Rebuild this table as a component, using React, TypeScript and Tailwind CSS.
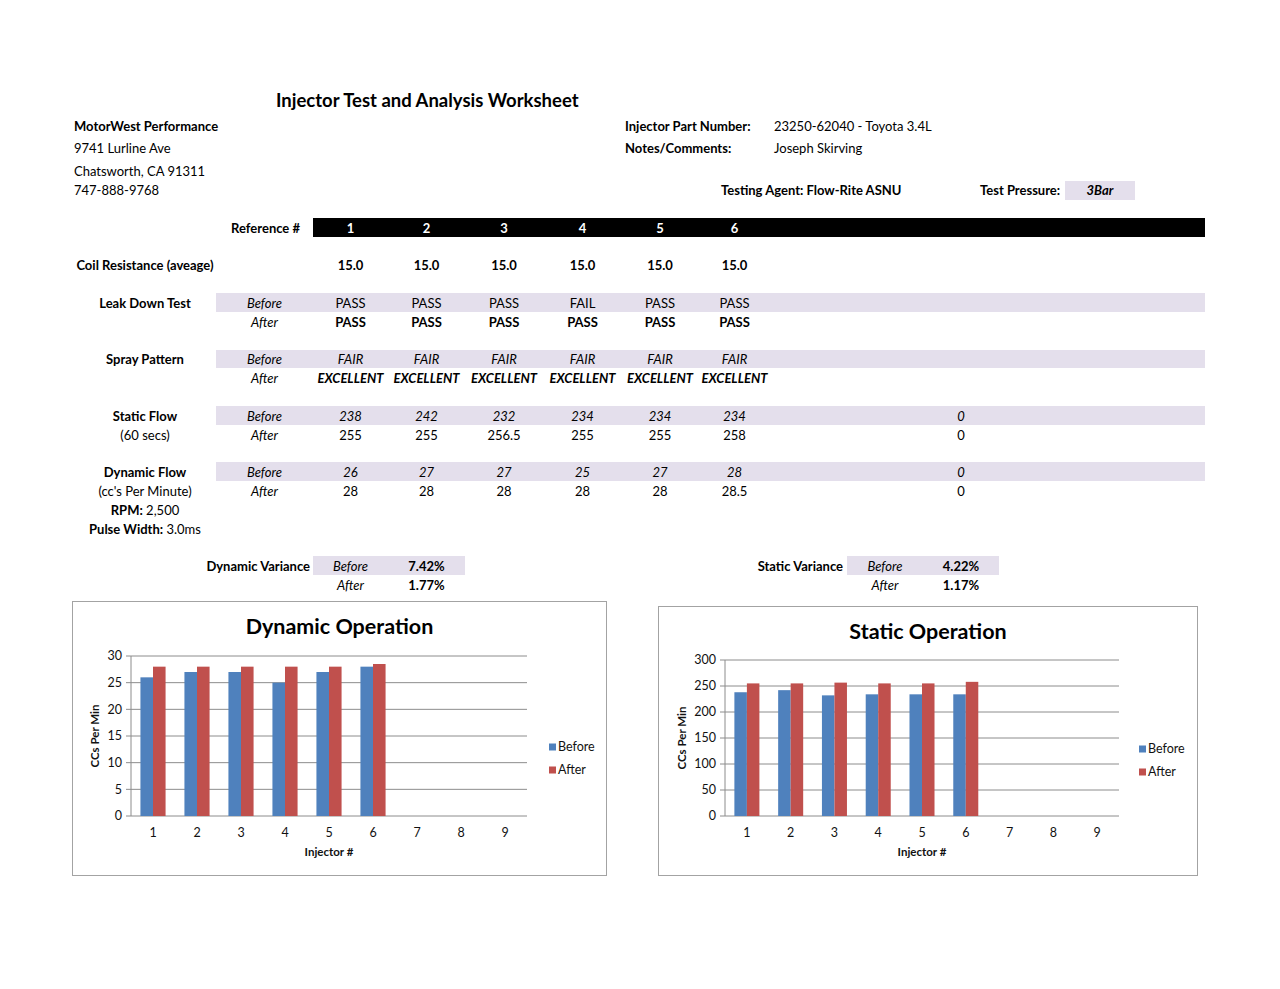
import React from 'react';

const BAND = 'bg-[#e4dfec]';
const GRID =
    'grid grid-cols-[142px_97px_75px_77px_78px_79px_76px_73px_76px_76px_76px_206px] auto-rows-[18.8px]';
const CELL = 'flex items-center justify-center whitespace-nowrap leading-none pt-[2px]';

type RowProps = {
    label?: React.ReactNode;
    sub?: string;
    values?: (string | number)[];
    extra?: string;
    band?: boolean;
    valueClass?: string;
    labelClass?: string;
};

function DataRow({ label, sub, values = [], extra, band, valueClass = '', labelClass = '' }: RowProps) {
    const bg = band ? BAND : '';
    return (
        <>
            <div className={`${CELL} ${labelClass}`}>{label}</div>
            <div className={`${CELL} ${bg} italic`}>{sub}</div>
            {[0, 1, 2, 3, 4, 5].map((i) => (
                <div key={i} className={`${CELL} ${bg} ${valueClass}`}>
                    {values[i]}
                </div>
            ))}
            <div className={bg} />
            <div className={bg} />
            <div className={`${CELL} ${bg} ${valueClass}`}>{extra}</div>
            <div className={bg} />
        </>
    );
}

function Blank() {
    return <div className="col-span-12" />;
}

type ChartProps = {
    title: string;
    w: number;
    h: number;
    px0: number;
    px1: number;
    py0: number;
    py1: number;
    max: number;
    step: number;
    before: number[];
    after: number[];
    titleY: number;
    yTitleX: number;
    xLabelY: number;
    xTitleY: number;
    legendX: number;
    legendY: number;
};

function BarChart(p: ChartProps) {
    const cw = (p.px1 - p.px0) / 9;
    const bar = cw / 3.5;
    const scale = (v: number) => p.py1 - (v / p.max) * (p.py1 - p.py0);
    const ticks: number[] = [];
    for (let v = 0; v <= p.max; v += p.step) ticks.push(v);
    const font = { fontFamily: 'Lato, sans-serif' };

    return (
        <svg width={p.w} height={p.h} style={font} className="block">
            <text x={p.w / 2} y={p.titleY} textAnchor="middle" dominantBaseline="middle" fontSize={21.5} fontWeight={700} fill="#000">
                {p.title}
            </text>
            {ticks.map((v) => (
                <g key={v}>
                    <line x1={p.px0 - 5} x2={p.px1} y1={scale(v)} y2={scale(v)} stroke="#8c8c8c" strokeWidth={1} />
                    <text x={p.px0 - 9} y={scale(v) + 1} textAnchor="end" dominantBaseline="middle" fontSize={12.5} fill="#111">
                        {v}
                    </text>
                </g>
            ))}
            <line x1={p.px0} x2={p.px0} y1={p.py0} y2={p.py1} stroke="#8c8c8c" strokeWidth={1} />
            {p.before.map((v, i) => (
                <g key={i}>
                    <rect x={p.px0 + i * cw + 0.75 * bar} y={scale(v)} width={bar} height={p.py1 - scale(v)} fill="#4f81bd" />
                    <rect x={p.px0 + i * cw + 1.75 * bar} y={scale(p.after[i])} width={bar} height={p.py1 - scale(p.after[i])} fill="#c0504d" />
                </g>
            ))}
            {[1, 2, 3, 4, 5, 6, 7, 8, 9].map((n, i) => (
                <text key={n} x={p.px0 + cw * (i + 0.5)} y={p.xLabelY} textAnchor="middle" dominantBaseline="middle" fontSize={12.5} fill="#111">
                    {n}
                </text>
            ))}
            <text x={(p.px0 + p.px1) / 2} y={p.xTitleY} textAnchor="middle" dominantBaseline="middle" fontSize={11.5} fontWeight={700} fill="#111">
                Injector #
            </text>
            <text
                x={p.yTitleX}
                y={(p.py0 + p.py1) / 2}
                transform={`rotate(-90 ${p.yTitleX} ${(p.py0 + p.py1) / 2})`}
                textAnchor="middle"
                dominantBaseline="middle"
                fontSize={11.5}
                fontWeight={700}
                fill="#111"
            >
                CCs Per Min
            </text>
            <rect x={p.legendX} y={p.legendY - 3.5} width={7} height={7} fill="#4f81bd" />
            <text x={p.legendX + 9} y={p.legendY + 1} dominantBaseline="middle" fontSize={12.5} fill="#111">
                Before
            </text>
            <rect x={p.legendX} y={p.legendY + 19.5} width={7} height={7} fill="#c0504d" />
            <text x={p.legendX + 9} y={p.legendY + 24} dominantBaseline="middle" fontSize={12.5} fill="#111">
                After
            </text>
        </svg>
    );
}

export default function App() {
    return (
        <div className="w-[1280px] h-[989px] bg-white text-[13px] text-black font-['Lato',sans-serif] overflow-hidden">
            <div className="pt-[91px] pl-[74px]">
                {/* header */}
                <div className="h-[20px] pl-[202px] flex items-center text-[18.5px] font-bold whitespace-nowrap">
                    Injector Test and Analysis Worksheet
                </div>
                <div className="mt-[6px] h-[19px] flex items-center whitespace-nowrap">
                    <span className="w-[551px] font-bold">MotorWest Performance</span>
                    <span className="w-[149px] font-bold">Injector Part Number:</span>
                    <span>23250-62040 - Toyota 3.4L</span>
                </div>
                <div className="mt-[3px] h-[19px] flex items-center whitespace-nowrap">
                    <span className="w-[551px]">9741 Lurline Ave</span>
                    <span className="w-[149px] font-bold">Notes/Comments:</span>
                    <span>Joseph Skirving</span>
                </div>
                <div className="mt-[4px] h-[19px] flex items-center whitespace-nowrap">
                    <span>Chatsworth, CA 91311</span>
                </div>
                <div className="h-[19px] flex items-center whitespace-nowrap">
                    <span className="w-[647px]">747-888-9768</span>
                    <span className="w-[259px] font-bold">Testing Agent: Flow-Rite ASNU</span>
                    <span className="w-[85px] font-bold">Test Pressure:</span>
                    <span className={`w-[70px] h-full flex items-center justify-center font-bold italic ${BAND}`}>3Bar</span>
                </div>

                {/* results table */}
                <div className={`mt-[18px] ${GRID}`}>
                    <div />
                    <div className={`${CELL} justify-end pr-[13px] font-bold`}>Reference #</div>
                    {[1, 2, 3, 4, 5, 6].map((n) => (
                        <div key={n} className={`${CELL} bg-black text-white font-bold`}>
                            {n}
                        </div>
                    ))}
                    <div className="bg-black" />
                    <div className="bg-black" />
                    <div className="bg-black" />
                    <div className="bg-black" />
                    <Blank />

                    <DataRow label="Coil Resistance (aveage)" labelClass="font-bold" values={['15.0', '15.0', '15.0', '15.0', '15.0', '15.0']} valueClass="font-bold" />
                    <Blank />

                    <DataRow label="Leak Down Test" labelClass="font-bold" sub="Before" band values={['PASS', 'PASS', 'PASS', 'FAIL', 'PASS', 'PASS']} />
                    <DataRow sub="After" values={['PASS', 'PASS', 'PASS', 'PASS', 'PASS', 'PASS']} valueClass="font-bold" />
                    <Blank />

                    <DataRow label="Spray Pattern" labelClass="font-bold" sub="Before" band values={['FAIR', 'FAIR', 'FAIR', 'FAIR', 'FAIR', 'FAIR']} valueClass="italic" />
                    <DataRow sub="After" values={Array(6).fill('EXCELLENT')} valueClass="font-bold italic" />
                    <Blank />

                    <DataRow label="Static Flow" labelClass="font-bold" sub="Before" band values={[238, 242, 232, 234, 234, 234]} extra="0" valueClass="italic" />
                    <DataRow label="(60 secs)" sub="After" values={[255, 255, '256.5', 255, 255, 258]} extra="0" />
                    <Blank />

                    <DataRow label="Dynamic Flow" labelClass="font-bold" sub="Before" band values={[26, 27, 27, 25, 27, 28]} extra="0" valueClass="italic" />
                    <DataRow label="(cc's Per Minute)" sub="After" values={[28, 28, 28, 28, 28, '28.5']} extra="0" />
                    <DataRow
                        label={
                            <span>
                                <b>RPM:</b> 2,500
                            </span>
                        }
                    />
                    <DataRow
                        label={
                            <span>
                                <b>Pulse Width:</b> 3.0ms
                            </span>
                        }
                    />
                    <Blank />

                    {/* variance */}
                    <div className={`${CELL} col-span-2 justify-end pr-[3px] font-bold`}>Dynamic Variance</div>
                    <div className={`${CELL} ${BAND} italic`}>Before</div>
                    <div className={`${CELL} ${BAND} font-bold`}>7.42%</div>
                    <div />
                    <div />
                    <div />
                    <div className={`${CELL} col-span-2 justify-end pr-[4px] font-bold`}>Static Variance</div>
                    <div className={`${CELL} ${BAND} italic`}>Before</div>
                    <div className={`${CELL} ${BAND} font-bold`}>4.22%</div>
                    <div />

                    <div className="col-span-2" />
                    <div className={`${CELL} italic`}>After</div>
                    <div className={`${CELL} font-bold`}>1.77%</div>
                    <div />
                    <div />
                    <div />
                    <div className="col-span-2" />
                    <div className={`${CELL} italic`}>After</div>
                    <div className={`${CELL} font-bold`}>1.17%</div>
                    <div />
                </div>

                {/* charts */}
                <div className="flex items-start ml-[-2px]">
                    <div className="mt-[7px] w-[535px] h-[275px] border border-[#a3a3a3]">
                        <BarChart
                            title="Dynamic Operation"
                            w={533}
                            h={273}
                            px0={58}
                            px1={454}
                            py0={54}
                            py1={214}
                            max={30}
                            step={5}
                            before={[26, 27, 27, 25, 27, 28]}
                            after={[28, 28, 28, 28, 28, 28.5]}
                            titleY={26}
                            yTitleX={23}
                            xLabelY={232}
                            xTitleY={251}
                            legendX={476}
                            legendY={145}
                        />
                    </div>
                    <div className="ml-[51px] mt-[12px] w-[540px] h-[270px] border border-[#a3a3a3]">
                        <BarChart
                            title="Static Operation"
                            w={538}
                            h={268}
                            px0={66}
                            px1={460}
                            py0={53}
                            py1={209}
                            max={300}
                            step={50}
                            before={[238, 242, 232, 234, 234, 234]}
                            after={[255, 255, 256.5, 255, 255, 258]}
                            titleY={26}
                            yTitleX={24}
                            xLabelY={227}
                            xTitleY={246}
                            legendX={480}
                            legendY={142}
                        />
                    </div>
                </div>
            </div>
        </div>
    );
}
